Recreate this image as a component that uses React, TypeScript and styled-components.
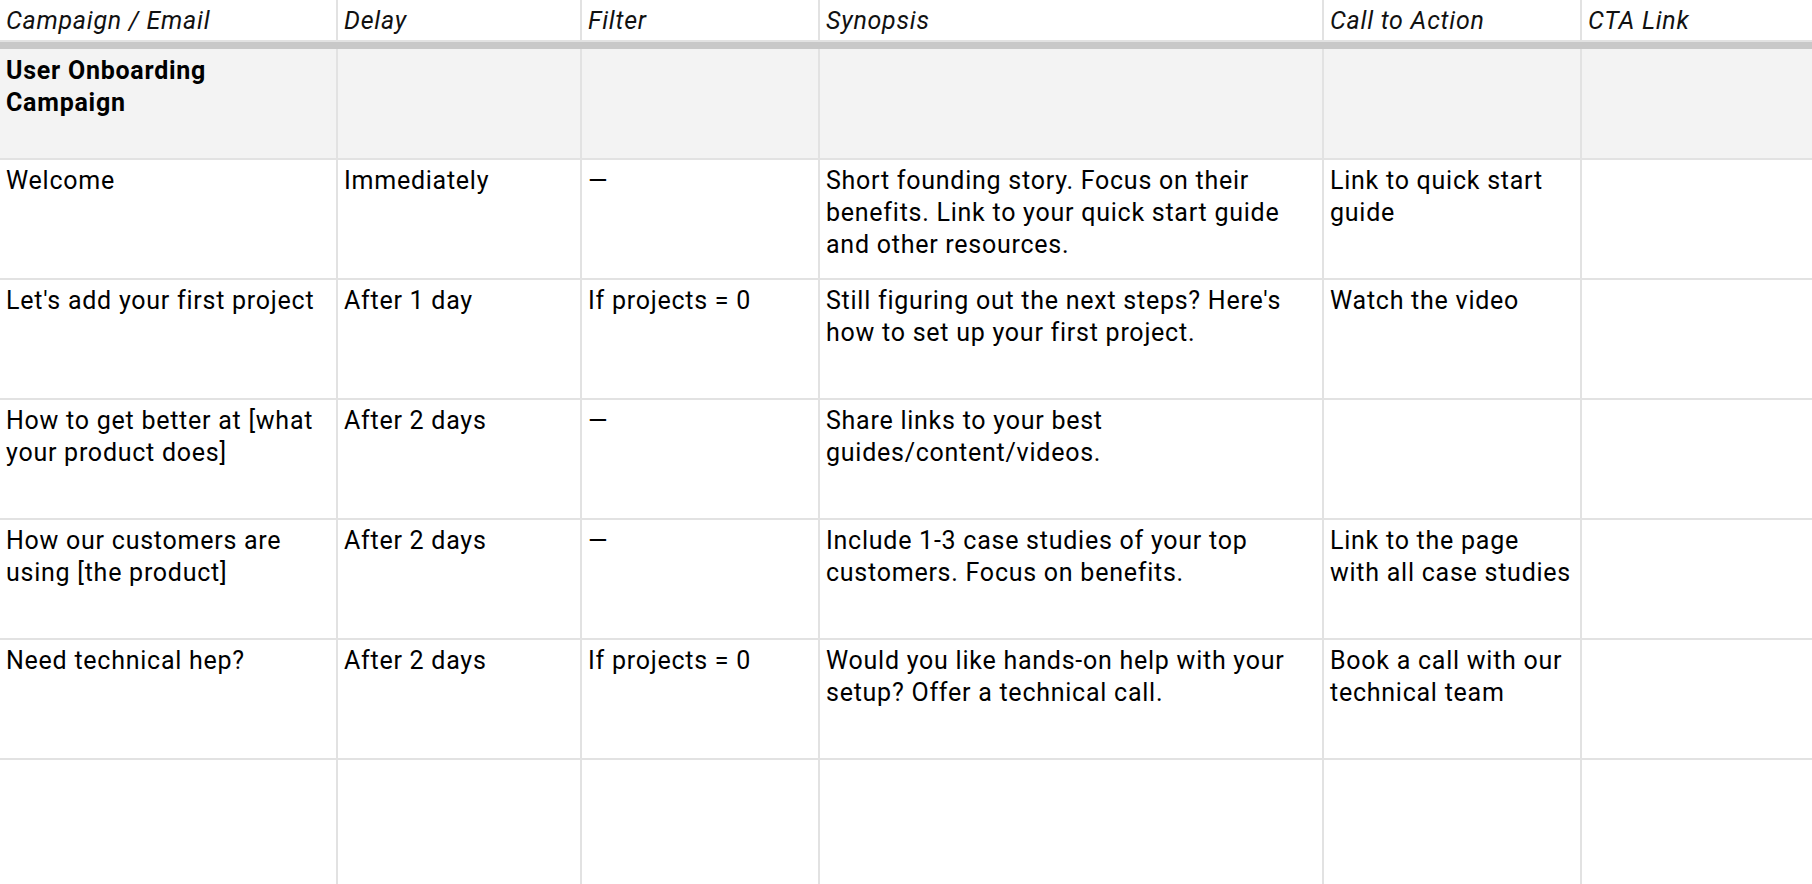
import React from 'react'
import styled, { createGlobalStyle } from 'styled-components'

const GlobalStyle = createGlobalStyle`
    html, body {
        margin: 0;
        padding: 0;
        background: #ffffff;
        overflow: hidden;
    }
    body {
        font-family: Roboto, "Liberation Sans", Arial, sans-serif;
        color: #000000;
    }
`

// spreadsheet-like grid, last row runs off the bottom of the window
const Sheet = styled.div`
    display: grid;
    grid-template-columns: 338px 244px 238px 504px 258px 1fr;
    grid-template-rows: 42px 7px 111px repeat(5, 120px) 160px;
    width: 1812px;
    height: 884px;
    overflow: hidden;
    font-size: 25px;
    letter-spacing: 0.75px;
    line-height: 32px;
`

const Cell = styled.div<{ $last?: boolean }>`
    box-sizing: border-box;
    padding: 5px 6px 4px;
    border-right: ${props => props.$last ? 'none' : '2px solid #e2e2e2'};
    border-bottom: 2px solid #e2e2e2;
    overflow: hidden;
`

const HeadCell = styled(Cell)`
    font-style: italic;
    color: #111111;
`

const Band = styled.div`
    grid-column: 1 / -1;
    background: #c8c8c8;
`

const SectionCell = styled(Cell)`
    padding-top: 6px;
    background: #f3f3f3;
    font-weight: 700;
`

const headers = ['Campaign / Email', 'Delay', 'Filter', 'Synopsis', 'Call to Action', 'CTA Link']

const emails = [
    ['Welcome', 'Immediately', '—', 'Short founding story. Focus on their benefits. Link to your quick start guide and other resources.', 'Link to quick start guide', ''],
    ["Let's add your first project", 'After 1 day', 'If projects = 0', "Still figuring out the next steps? Here's how to set up your first project.", 'Watch the video', ''],
    ['How to get better at [what your product does]', 'After 2 days', '—', 'Share links to your best guides/content/videos.', '', ''],
    ['How our customers are using [the product]', 'After 2 days', '—', 'Include 1-3 case studies of your top customers. Focus on benefits.', 'Link to the page with all case studies', ''],
    ['Need technical hep?', 'After 2 days', 'If projects = 0', 'Would you like hands-on help with your setup? Offer a technical call.', 'Book a call with our technical team', ''],
    ['', '', '', '', '', ''],
]

export default function App() {
    return (
        <>
            <GlobalStyle />
            <Sheet>
                {headers.map((h, i) => (
                    <HeadCell key={h} $last={i === headers.length - 1}>{h}</HeadCell>
                ))}
                <Band />
                {headers.map((h, i) => (
                    <SectionCell key={'s' + h} $last={i === headers.length - 1}>
                        {i === 0 ? <>User Onboarding<br />Campaign</> : null}
                    </SectionCell>
                ))}
                {emails.map((row, r) =>
                    row.map((text, c) => (
                        <Cell key={r + '-' + c} $last={c === row.length - 1}>{text}</Cell>
                    ))
                )}
            </Sheet>
        </>
    )
}
